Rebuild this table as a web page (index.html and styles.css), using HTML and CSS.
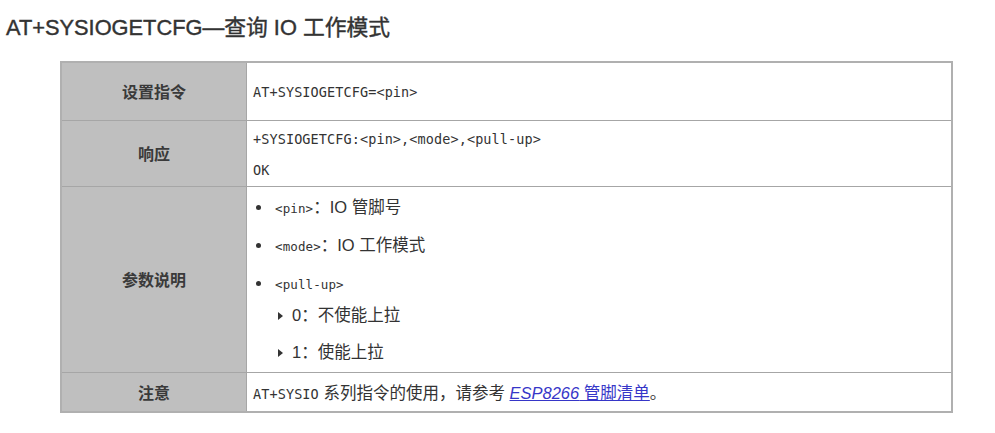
FILE: index.html
```html
<!DOCTYPE html>
<html lang="zh">
<head>
<meta charset="utf-8">
<link rel="stylesheet" href="styles.css">
</head>
<body>
<h2 class="title">AT+SYSIOGETCFG—查询 IO 工作模式</h2>
<table class="cmd">
  <tr class="r1">
    <th>设置指令</th>
    <td><span class="mono">AT+SYSIOGETCFG=&lt;pin&gt;</span></td>
  </tr>
  <tr class="r2">
    <th>响应</th>
    <td><div class="lines"><div class="line mono">+SYSIOGETCFG:&lt;pin&gt;,&lt;mode&gt;,&lt;pull-up&gt;</div><div class="line mono">OK</div></div></td>
  </tr>
  <tr class="r3">
    <th>参数说明</th>
    <td>
      <ul class="params">
        <li><span class="mono sm">&lt;pin&gt;</span>：IO 管脚号</li>
        <li><span class="mono sm">&lt;mode&gt;</span>：IO 工作模式</li>
        <li><span class="mono sm">&lt;pull-up&gt;</span>
          <ul class="sub">
            <li>0：不使能上拉</li>
            <li>1：使能上拉</li>
          </ul>
        </li>
      </ul>
    </td>
  </tr>
  <tr class="r4">
    <th>注意</th>
    <td><span class="mono">AT+SYSIO</span> 系列指令的使用，请参考 <a class="link" href="#"><i>ESP8266</i> 管脚清单</a>。</td>
  </tr>
</table>
</body>
</html>
```
FILE: styles.css
```css
html, body {
  margin: 0;
  padding: 0;
  background: #ffffff;
}
body {
  font-family: "Liberation Sans", "Noto Sans CJK SC", sans-serif;
  color: #333333;
}
.title {
  margin: 0;
  padding: 14px 0 0 6px;
  height: 47px;
  box-sizing: border-box;
  font-size: 21.8px;
  font-weight: 400;
  line-height: 28px;
  color: #333333;
  -webkit-text-stroke: 0.4px #333333;
  font-family: "Liberation Sans", "Noto Sans CJK SC", sans-serif;
}
.cmd {
  margin: 14px 0 0 60px;
  width: 893px;
  border-collapse: collapse;
  border: 2px solid #b0b0b0;
  font-size: 16.5px;
  color: #333333;
}
.cmd th, .cmd td {
  border: 1px solid #a6a6a6;
  padding: 0;
  vertical-align: middle;
}
.cmd th {
  width: 184px;
  background: #bfbfbf;
  font-family: "Noto Sans CJK SC", sans-serif;
  font-weight: 700;
  font-size: 16px;
  text-align: center;
  color: #3a3a3a;
}
.cmd td {
  padding-left: 6px;
  font-family: "Liberation Sans", "Noto Sans CJK SC", sans-serif;
}
.mono {
  font-family: "DejaVu Sans Mono", monospace;
  font-size: 13.5px;
  letter-spacing: 0.1px;
}
.sm {
  font-size: 12.5px;
}
.r1 { height: 58px; }
.r2 { height: 66px; }
.r2 .lines { padding-top: 3px; }
.r2 .line { line-height: 31px; }
.r3 { height: 186px; }
.r4 { height: 40px; }
.params {
  margin: 0;
  padding: 2px 0 1px 22px;
  list-style: none;
}
.params > li {
  line-height: 37px;
}
.params > li::before {
  content: "";
  display: inline-block;
  width: 5px;
  height: 5px;
  border-radius: 50%;
  background: #333333;
  margin-left: -19px;
  margin-right: 14px;
  vertical-align: 3px;
}
.sub {
  margin: -6px 0 0 0;
  padding: 0 0 0 3px;
  list-style: none;
}
.sub li {
  line-height: 37px;
}
.sub li::before {
  content: "";
  display: inline-block;
  width: 0;
  height: 0;
  border-left: 5px solid #333333;
  border-top: 4px solid transparent;
  border-bottom: 4px solid transparent;
  margin-right: 9px;
  vertical-align: 1px;
}
.link {
  color: #3636c8;
  text-decoration: underline;
}
```
